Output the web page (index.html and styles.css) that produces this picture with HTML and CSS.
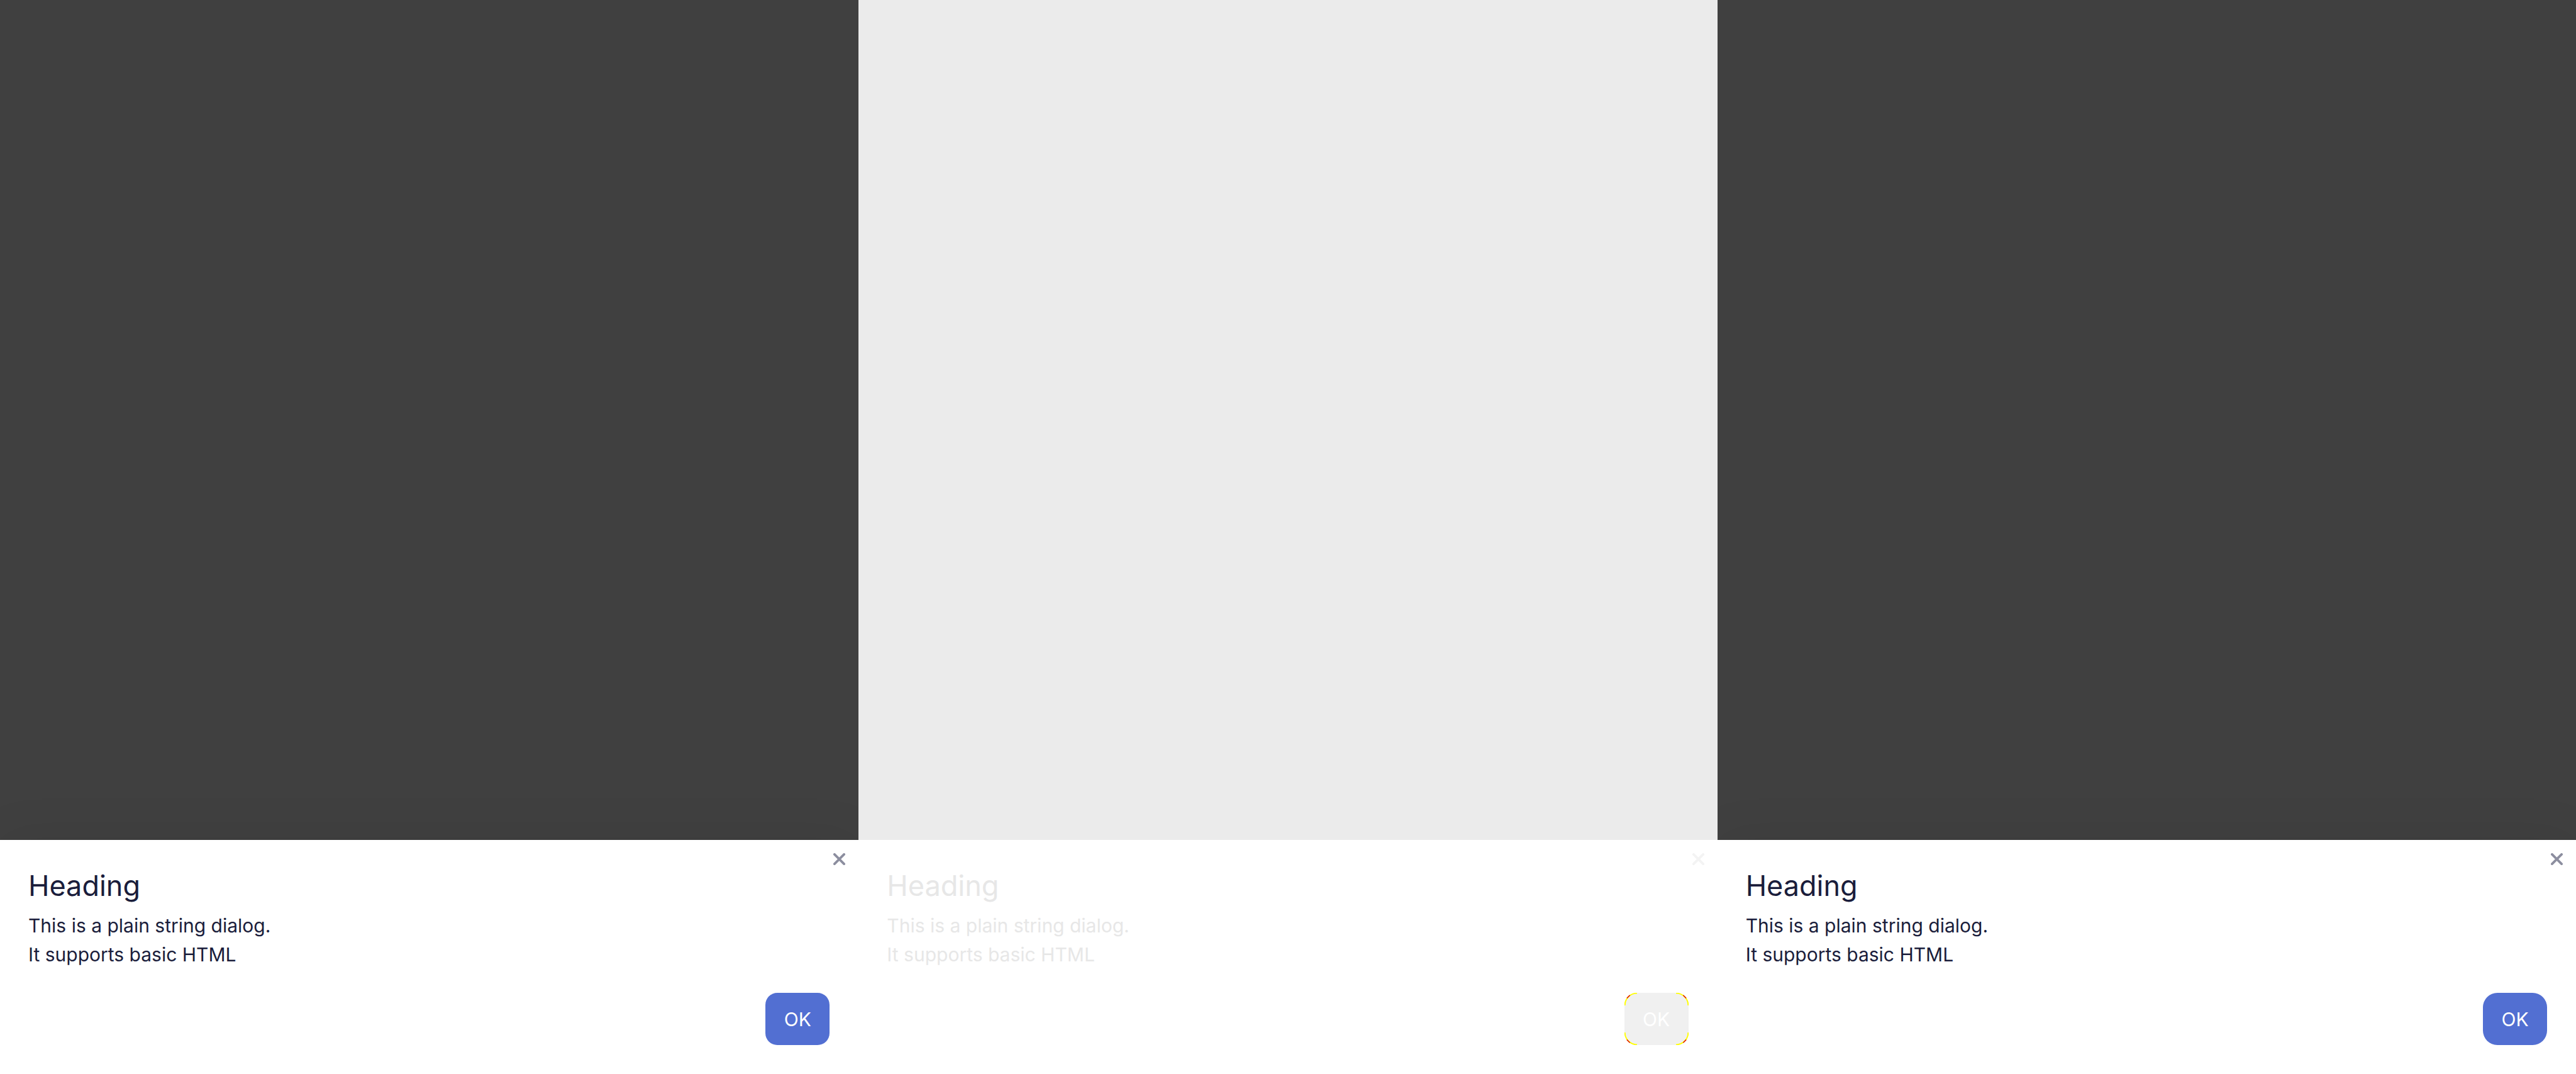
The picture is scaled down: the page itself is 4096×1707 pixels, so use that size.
FILE: index.html
```html
<!DOCTYPE html>
<html lang="en">
<head>
<meta charset="utf-8">
<title>Dialog comparison</title>
<link rel="stylesheet" href="styles.css">
</head>
<body>
<main class="compare">
  <section class="pane">
    <div class="dialog" role="dialog" aria-labelledby="title-a">
      <button class="close" type="button" aria-label="Close"><svg class="close-icon" viewBox="0 0 20 20"><path d="M2 2 18 18M18 2 2 18"/></svg></button>
      <h2 class="title" id="title-a">Heading</h2>
      <p class="text">This is a plain string dialog.<br>It supports basic HTML</p>
      <div class="actions"><button class="ok" type="button">OK</button></div>
    </div>
  </section>
  <section class="pane pane-diff">
    <div class="dialog" role="dialog" aria-labelledby="title-b">
      <button class="close" type="button" aria-label="Close"><svg class="close-icon" viewBox="0 0 20 20"><path d="M2 2 18 18M18 2 2 18"/></svg></button>
      <h2 class="title" id="title-b">Heading</h2>
      <p class="text">This is a plain string dialog.<br>It supports basic HTML</p>
      <div class="actions"><button class="ok" type="button">OK
        <svg class="corner corner-tl" viewBox="0 0 21 21"><path class="edge" d="M.7 21A20.3 20.3 0 0 1 21 .7"/><path class="peak" d="M4 9 9 4"/></svg>
        <svg class="corner corner-tr" viewBox="0 0 21 21"><path class="edge" d="M.7 21A20.3 20.3 0 0 1 21 .7"/><path class="peak" d="M4 9 9 4"/></svg>
        <svg class="corner corner-bl" viewBox="0 0 21 21"><path class="edge" d="M.7 21A20.3 20.3 0 0 1 21 .7"/><path class="peak" d="M4 9 9 4"/></svg>
        <svg class="corner corner-br" viewBox="0 0 21 21"><path class="edge" d="M.7 21A20.3 20.3 0 0 1 21 .7"/><path class="peak" d="M4 9 9 4"/></svg>
      </button></div>
    </div>
  </section>
  <section class="pane pane-round">
    <div class="dialog" role="dialog" aria-labelledby="title-c">
      <button class="close" type="button" aria-label="Close"><svg class="close-icon" viewBox="0 0 20 20"><path d="M2 2 18 18M18 2 2 18"/></svg></button>
      <h2 class="title" id="title-c">Heading</h2>
      <p class="text">This is a plain string dialog.<br>It supports basic HTML</p>
      <div class="actions"><button class="ok" type="button">OK</button></div>
    </div>
  </section>
</main>
</body>
</html>
```
FILE: styles.css
```css
* { box-sizing: border-box; }

body {
  margin: 0;
  font-family: Inter, "Liberation Sans", sans-serif;
  color: #1a1d3b;
}

.compare {
  display: grid;
  grid-template-columns: repeat(3, 1fr);
  min-height: 100vh;
}

.pane {
  display: flex;
  flex-direction: column;
  justify-content: flex-end;
  overflow: hidden;
  background: #404040;
}

.dialog {
  position: relative;
  padding: 46px 46px 46px 45px;
  background: #fff;
  box-shadow: 0 0 76px rgba(0, 0, 0, 0.08);
}

.title {
  margin: 0 0 14px;
  font-size: 45px;
  line-height: 53px;
  font-weight: 400;
}

.text {
  margin: 0 0 38px;
  font-size: 30px;
  line-height: 46px;
}

.actions {
  display: flex;
  justify-content: flex-end;
}

.ok {
  position: relative;
  width: 102px;
  height: 83px;
  padding: 0;
  border: 0;
  border-radius: 19px;
  background: #526fd2;
  color: #fff;
  font: 400 30px/46px Inter, "Liberation Sans", sans-serif;
}

.close {
  position: absolute;
  top: 8px;
  right: 8px;
  display: grid;
  place-items: center;
  width: 45px;
  height: 45px;
  padding: 0;
  border: 0;
  background: none;
  color: #8c8e9f;
}

.close-icon {
  width: 19px;
  height: 19px;
  fill: none;
  stroke: currentColor;
  stroke-width: 4;
  stroke-linecap: round;
}

.pane-diff { background: #ebebeb; color: #e7e7e7; }
.pane-diff .dialog { box-shadow: none; }
.pane-diff .close { color: #f3f3f3; }
.pane-diff .ok { background: #f0f0f0; }
.pane-round .ok { border-radius: 23px; }

.corner {
  position: absolute;
  width: 20px;
  height: 20px;
}
.corner-tl { top: 0; left: 0; }
.corner-tr { top: 0; right: 0; transform: scaleX(-1); }
.corner-bl { bottom: 0; left: 0; transform: scaleY(-1); }
.corner-br { bottom: 0; right: 0; transform: scale(-1); }
.edge { fill: none; stroke: #ff0; stroke-width: 2; }
.peak { fill: none; stroke: #e00000; stroke-width: 1.4; }
```
